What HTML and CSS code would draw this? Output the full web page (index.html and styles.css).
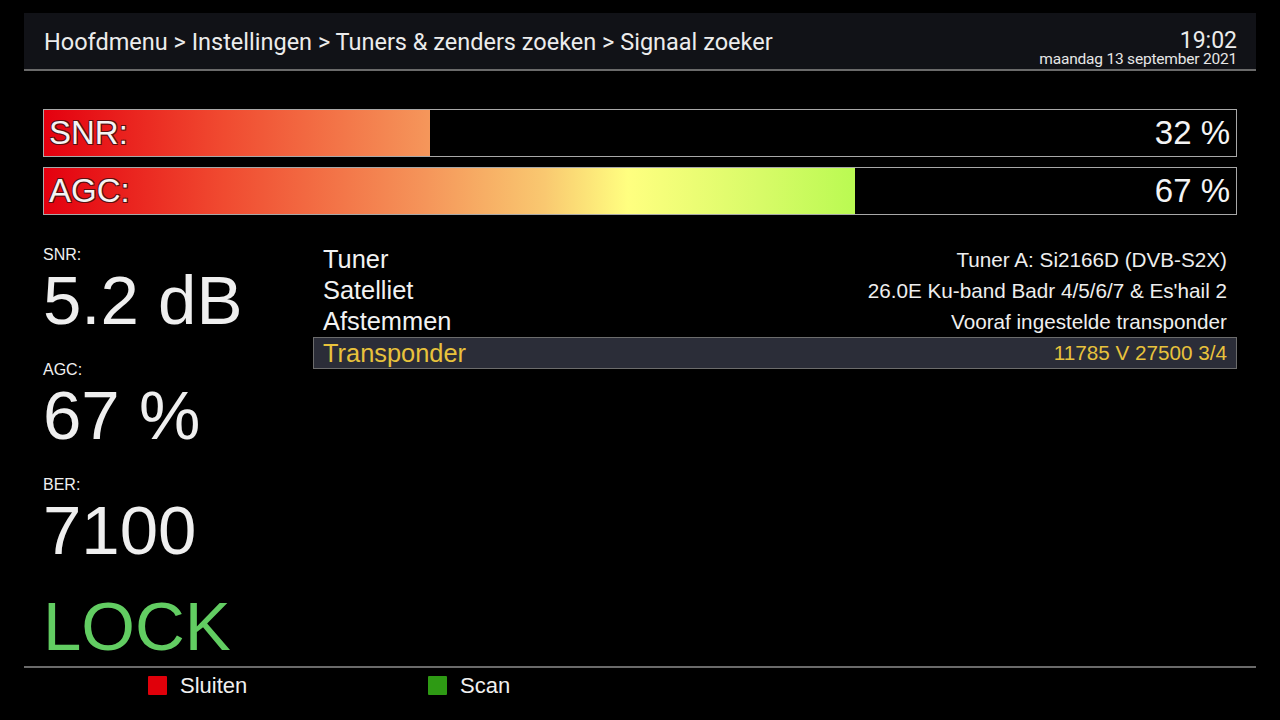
FILE: index.html
```html
<!DOCTYPE html>
<html>
<head>
<meta charset="utf-8">
<link rel="stylesheet" href="styles.css">
</head>
<body>
<div class="screen">
  <header class="topbar">
    <div class="crumbs">Hoofdmenu &gt; Instellingen &gt; Tuners &amp; zenders zoeken &gt; Signaal zoeker</div>
    <div class="clock">
      <div class="time">19:02</div>
      <div class="date">maandag 13 september 2021</div>
    </div>
  </header>

  <section class="bars">
    <div class="bar">
      <div class="fill" style="width:32.4%"></div>
      <span class="bar-label">SNR:</span>
      <span class="bar-value">32 %</span>
    </div>
    <div class="bar">
      <div class="fill" style="width:68%"></div>
      <span class="bar-label">AGC:</span>
      <span class="bar-value">67 %</span>
    </div>
  </section>

  <main class="content">
    <div class="stats">
      <div class="stat">
        <div class="stat-label">SNR:</div>
        <div class="stat-value">5.2 dB</div>
      </div>
      <div class="stat">
        <div class="stat-label">AGC:</div>
        <div class="stat-value">67 %</div>
      </div>
      <div class="stat">
        <div class="stat-label">BER:</div>
        <div class="stat-value">7100</div>
      </div>
      <div class="lock">LOCK</div>
    </div>
    <div class="list">
      <div class="row"><span class="key">Tuner</span><span class="val">Tuner A: Si2166D (DVB-S2X)</span></div>
      <div class="row"><span class="key">Satelliet</span><span class="val">26.0E Ku-band Badr 4/5/6/7 &amp; Es'hail 2</span></div>
      <div class="row"><span class="key">Afstemmen</span><span class="val">Vooraf ingestelde transponder</span></div>
      <div class="row selected"><span class="key">Transponder</span><span class="val">11785 V 27500 3/4</span></div>
    </div>
  </main>

  <footer class="footer">
    <div class="btn"><span class="sq red"></span>Sluiten</div>
    <div class="btn"><span class="sq green"></span>Scan</div>
  </footer>
</div>
</body>
</html>
```

FILE: styles.css
```css
* { box-sizing: border-box; }
html, body { margin: 0; padding: 0; background: #000; }
body {
  width: 1280px;
  height: 720px;
  overflow: hidden;
  font-family: "Liberation Sans", Arial, sans-serif;
  color: #f0f0f0;
}
.screen {
  display: flex;
  flex-direction: column;
  height: 720px;
  padding-top: 13px;
}
.topbar {
  margin: 0 24px;
  height: 58px;
  background: #111217;
  border-bottom: 2px solid #6a6a6a;
  display: flex;
  justify-content: space-between;
  align-items: flex-start;
  padding: 0 19px 0 20px;
  font-family: Roboto, "Liberation Sans", sans-serif;
}
.crumbs {
  font-size: 23.5px;
  line-height: 28px;
  margin-top: 15px;
  color: #ececec;
}
.clock {
  text-align: right;
  margin-top: 17px;
}
.time {
  font-size: 23px;
  line-height: 22px;
  color: #ececec;
}
.date {
  font-size: 15.5px;
  line-height: 15px;
  color: #e6e6e6;
  letter-spacing: -0.2px;
}
.bars {
  margin: 38px 43px 0;
  display: flex;
  flex-direction: column;
  gap: 10px;
}
.bar {
  position: relative;
  height: 48px;
  border: 1px solid #a8a8a8;
  background: #000;
  display: flex;
  align-items: center;
  justify-content: space-between;
  padding: 0 6px 0 5px;
}
.fill {
  position: absolute;
  left: 0; top: 0; bottom: 0;
  background-image: linear-gradient(90deg, #e4000f 0%, #f04a30 15%, #f5955a 32%, #f9c870 42%, #ffff80 49%, #d8fb68 60%, #bafa52 68%, #70e020 100%);
  background-size: 1192px 100%;
  background-repeat: no-repeat;
}
.bar-label, .bar-value {
  position: relative;
  font-size: 33px;
  color: #f4f4f4;
}
.bar-label {
  text-shadow: -1px -1px 0 #5a1010, 1px -1px 0 #5a1010, -1px 1px 0 #5a1010, 1px 1px 0 #5a1010;
}
.content {
  flex: 1;
  display: flex;
  padding: 0 43px;
  margin-top: 28px;
}
.stats {
  width: 270px;
  display: flex;
  flex-direction: column;
}
.stat-label {
  font-size: 16px;
  line-height: 20px;
  margin-top: 2px;
  color: #f0f0f0;
}
.stat-value {
  font-size: 69px;
  line-height: 72px;
  color: #efefef;
  margin-bottom: 21px;
}
.lock {
  font-size: 69px;
  line-height: 72px;
  color: #62cd62;
  margin-top: 3px;
}
.list {
  flex: 1;
  display: flex;
  flex-direction: column;
  margin-top: 1px;
}
.row {
  height: 31px;
  display: flex;
  justify-content: space-between;
  align-items: center;
  padding: 0 9px 0 9px;
  border: 1px solid transparent;
}
.key {
  font-size: 25.4px;
  color: #f2f2f2;
}
.val {
  font-size: 20.7px;
  color: #eeeeee;
}
.row.selected {
  height: 32px;
  background: #2b2d38;
  border-color: #6c6c6c;
}
.row.selected .key, .row.selected .val {
  color: #e8c23c;
}
.footer {
  margin: 0 24px;
  height: 54px;
  border-top: 2px solid #6a6a6a;
  display: flex;
  padding-left: 124px;
}
.btn {
  width: 280px;
  display: flex;
  align-items: center;
  height: 35px;
  font-size: 22px;
  color: #f0f0f0;
}
.sq {
  width: 19px;
  height: 19px;
  margin-right: 13px;
  border-radius: 1px;
}
.sq.red { background: #e0000a; }
.sq.green { background: #2e9a14; }
```
